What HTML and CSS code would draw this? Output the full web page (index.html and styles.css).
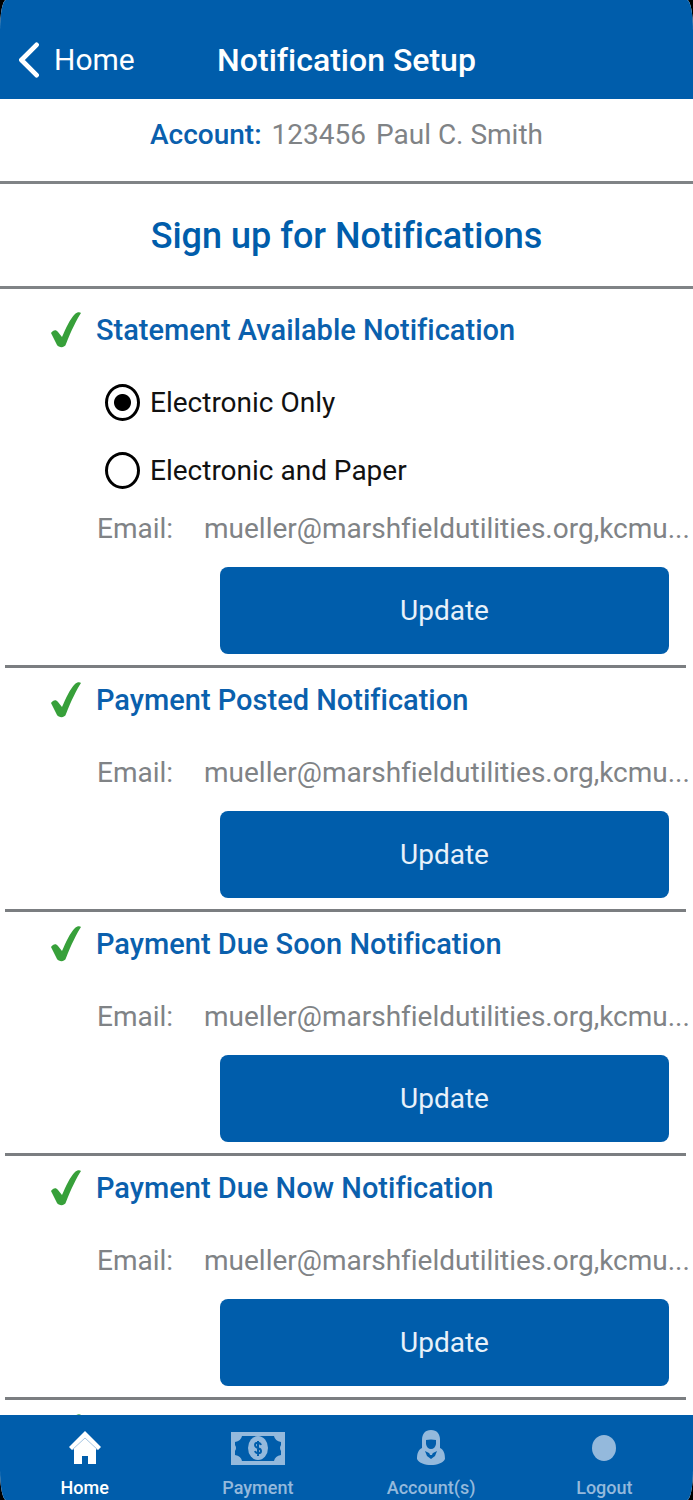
FILE: index.html
```html
<!DOCTYPE html>
<html lang="en">
<head>
<meta charset="utf-8">
<meta name="viewport" content="width=device-width, initial-scale=1">
<title>Notification Setup</title>
<link rel="stylesheet" href="styles.css">
</head>
<body>
<svg class="defs" aria-hidden="true">
  <symbol id="check" viewBox="0 0 31 36">
    <path d="M1 21C3 18 6 17 8 20L12 25C16 16 20 7 25 2C27 0 30 0 31 1C27 7 21 19 16 32C15 36 9 36 7 33C5 29 3 25 1 21Z" fill="#37a03a"/>
  </symbol>
</svg>
<div class="app">
  <header class="topbar">
    <a class="back" href="#">
      <svg class="back-icon" viewBox="0 0 22 38" aria-hidden="true"><path d="M19 3L3 19L19 35" fill="none" stroke="#fff" stroke-width="5" stroke-linecap="round" stroke-linejoin="round"/></svg>
      <span>Home</span>
    </a>
    <h1 class="title">Notification Setup</h1>
  </header>
  <main class="content">
    <p class="account"><strong>Account:</strong><span>123456</span><span>Paul C. Smith</span></p>
    <h2 class="heading">Sign up for Notifications</h2>

    <section class="item first">
      <h3 class="item-title"><svg class="check" aria-hidden="true"><use href="#check"/></svg>Statement Available Notification</h3>
      <div class="options">
        <label class="option"><input type="radio" name="delivery" checked>Electronic Only</label>
        <label class="option"><input type="radio" name="delivery">Electronic and Paper</label>
      </div>
      <p class="email"><span class="email-label">Email:</span><span>mueller@marshfieldutilities.org,kcmu...</span></p>
      <button class="update" type="button">Update</button>
    </section>

    <section class="item">
      <h3 class="item-title"><svg class="check" aria-hidden="true"><use href="#check"/></svg>Payment Posted Notification</h3>
      <p class="email"><span class="email-label">Email:</span><span>mueller@marshfieldutilities.org,kcmu...</span></p>
      <button class="update" type="button">Update</button>
    </section>

    <section class="item">
      <h3 class="item-title"><svg class="check" aria-hidden="true"><use href="#check"/></svg>Payment Due Soon Notification</h3>
      <p class="email"><span class="email-label">Email:</span><span>mueller@marshfieldutilities.org,kcmu...</span></p>
      <button class="update" type="button">Update</button>
    </section>

    <section class="item">
      <h3 class="item-title"><svg class="check" aria-hidden="true"><use href="#check"/></svg>Payment Due Now Notification</h3>
      <p class="email"><span class="email-label">Email:</span><span>mueller@marshfieldutilities.org,kcmu...</span></p>
      <button class="update" type="button">Update</button>
    </section>

    <section class="item">
      <div class="item-title"><svg class="check" aria-hidden="true"><use href="#check"/></svg></div>
    </section>
  </main>
  <nav class="tabbar">
    <a class="tab active" href="#">
      <svg class="tab-icon" viewBox="0 0 56 36" aria-hidden="true">
        <path d="M28 1L44 17L41 20L39 19V34H31V26H25V34H17V19L15 20L12 17Z" fill="currentColor"/>
        <path d="M15 20L28 8L41 20" fill="none" stroke="#a5c5e2" stroke-width="1"/>
      </svg>
      <span>Home</span>
    </a>
    <a class="tab" href="#">
      <svg class="tab-icon" viewBox="0 0 56 36" aria-hidden="true">
        <path d="M1 2H55V35H1Z" fill="currentColor"/>
        <path d="M12 6H44Q45 11 51 12V15Q49 18 51 21V25Q45 26 44 31H12Q11 26 5 25V21Q7 18 5 15V12Q11 11 12 6Z" fill="#005dab"/>
        <ellipse cx="28" cy="18" rx="10" ry="12" fill="currentColor"/>
        <path d="M31 15C30 12 25 12 25 15C25 19 31 17 31 21C31 24 26 24 25 21M28 11V26" fill="none" stroke="#005dab" stroke-width="2"/>
      </svg>
      <span>Payment</span>
    </a>
    <a class="tab" href="#">
      <svg class="tab-icon" viewBox="0 0 56 36" aria-hidden="true">
        <path d="M28 0C22 0 19 4 19 10V18C15 20 14 24 14 29C16 33 22 35 28 35C34 35 40 33 42 29C42 24 41 20 37 18V10C37 4 34 0 28 0Z" fill="currentColor"/>
        <path d="M23 10Q28 9 33 10V14Q32 19 28 19Q24 19 23 14Z" fill="#005dab"/>
        <path d="M22 21L28 24L34 21L32 26L28 29L24 26Z" fill="#005dab"/>
        <path d="M26 22H30L29 25H27Z" fill="currentColor"/>
      </svg>
      <span>Account(s)</span>
    </a>
    <a class="tab" href="#">
      <svg class="tab-icon" viewBox="0 0 56 36" aria-hidden="true"><ellipse cx="28" cy="18" rx="12" ry="13" fill="currentColor"/></svg>
      <span>Logout</span>
    </a>
  </nav>
</div>
</body>
</html>
```
FILE: styles.css
```css
* { box-sizing: border-box; }

body {
  margin: 0;
  background: #000;
  font-family: Roboto, "Liberation Sans", sans-serif;
  font-size: 28px;
  font-variant-ligatures: none;
  line-height: 36px;
  color: #808386;
}

h1, h2, h3, p { margin: 0; }

a { color: inherit; text-decoration: none; }

.defs { position: absolute; width: 0; height: 0; }

.app {
  display: flex;
  flex-direction: column;
  height: 100vh;
  overflow: hidden;
  background: #fff;
  border-radius: 6px / 30px;
}

.topbar {
  display: grid;
  grid-template-columns: 1fr auto 1fr;
  align-items: center;
  flex: none;
  padding: 42px 18px 21px;
  background: #005dab;
  color: #fff;
}

.back {
  display: flex;
  align-items: center;
  gap: 14px;
  font-size: 30px;
}

.back-icon { width: 22px; height: 36px; }

.title { font-size: 32px; font-weight: 500; line-height: 36px; }

.content { flex: 1; min-height: 0; overflow: hidden; }

.account {
  display: flex;
  justify-content: center;
  gap: 10px;
  padding: 18px 0 28px;
  border-bottom: 3px solid #808386;
}

.account strong { font-weight: 500; color: #0a60ad; }

.heading {
  padding: 28px 0 26px;
  border-bottom: 3px solid #808386;
  font-size: 36px;
  font-weight: 500;
  line-height: 48px;
  text-align: center;
  color: #005dab;
}

.item {
  display: flex;
  flex-direction: column;
  margin: 0 7px 0 5px;
  padding-bottom: 11px;
  border-bottom: 3px solid #7b7e81;
}

.item-title {
  display: flex;
  align-items: center;
  gap: 15px;
  padding: 14px 0 0 45px;
  font-size: 29px;
  font-weight: 500;
  line-height: 36px;
  color: #0a60ad;
}

.first .item-title { padding-top: 23px; }

.check { flex: none; width: 31px; height: 36px; }

.options {
  display: flex;
  flex-direction: column;
  gap: 31px;
  padding: 36px 0 0 100px;
  color: #111;
}

.option { display: flex; align-items: center; gap: 10px; }

.option input {
  appearance: none;
  width: 35px;
  height: 37px;
  margin: 0;
  border: 3px solid #000;
  border-radius: 50%;
  background: #fff;
}

.option input:checked {
  background: radial-gradient(circle, #000 8px, #fff 9px);
}

.email {
  display: flex;
  margin-top: 37px;
  padding-left: 92px;
  white-space: nowrap;
}

.first .email { margin-top: 22px; }

.email-label { flex: none; width: 107px; }

.update {
  height: 87px;
  margin: 20px 17px 0 215px;
  border: 0;
  border-radius: 8px;
  background: #005dab;
  font: inherit;
  color: #e8f1fa;
}

.tabbar {
  display: grid;
  grid-template-columns: repeat(4, 1fr);
  flex: none;
  padding: 15px 0 0;
  background: #005dab;
}

.tab {
  display: flex;
  flex-direction: column;
  align-items: center;
  gap: 10px;
  padding-right: 4px;
  font-size: 18px;
  font-weight: 500;
  line-height: 24px;
  color: #94b9dc;
}

.tab.active { color: #fff; }

.tab-icon { width: 56px; height: 36px; }
```
